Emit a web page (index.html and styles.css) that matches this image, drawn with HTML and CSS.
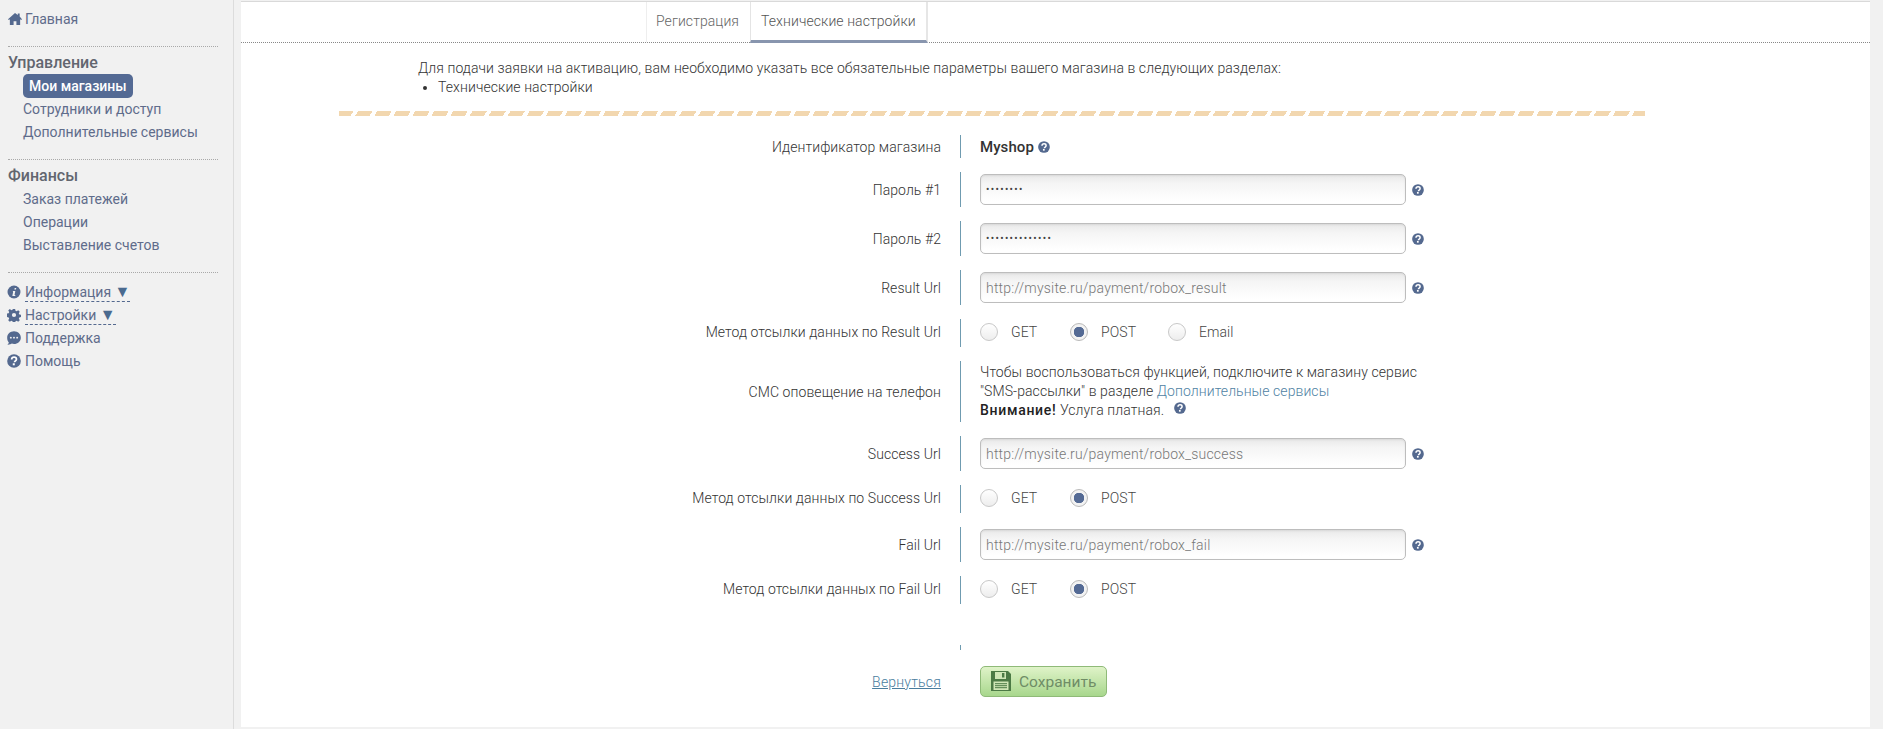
FILE: index.html
```html
<!DOCTYPE html>
<html lang="ru">
<head>
<meta charset="utf-8">
<title>Технические настройки</title>
<link rel="stylesheet" href="styles.css">
</head>
<body>
<svg class="sprite" width="0" height="0" aria-hidden="true">
  <symbol id="q" viewBox="0 0 16 16"><circle cx="8" cy="8" r="7.8" fill="currentColor"/><path d="M5.3 6.3C5.4 4.6 6.6 3.7 8.1 3.700c1.600 0 2.700 1 2.700 2.300 0 1.100-.6 1.600-1.300 2.100-.6.4-.9.7-.9 1.400" fill="none" stroke="#fff" stroke-width="2"/><rect x="6.600" y="10.600" width="2.300" height="2.300" fill="#fff"/></symbol>
</svg>
<div class="page">
  <aside class="sidebar">
    <a class="nav-top" href="#"><svg class="ico" viewBox="0.5 1.500 15 13"><path d="M8 1.500 0.500 8.200l.9 1L2.500 8.300V14.500h4v-4h3v4h4V8.300l1.100.9.900-1L13 5.400V2h-2v1.600z" fill="currentColor"/></svg>Главная</a>
    <div class="sep sep-a"></div>
    <h3>Управление</h3>
    <a class="pill" href="#">Мои магазины</a>
    <a class="sub" href="#">Сотрудники и доступ</a>
    <a class="sub" href="#">Дополнительные сервисы</a>
    <div class="sep sep-b"></div>
    <h3>Финансы</h3>
    <a class="sub sub-first" href="#">Заказ платежей</a>
    <a class="sub" href="#">Операции</a>
    <a class="sub" href="#">Выставление счетов</a>
    <div class="sep sep-c"></div>
    <a class="nav-low" href="#"><svg class="ico" viewBox="0 0 16 16"><circle cx="8" cy="8" r="7.400" fill="currentColor"/><path d="M8.800 3.300h1.800l-.4 1.900H8.400zM6.900 6.800h2.600l-.9 4.500h1l-.3 1.200H6.100l.9-4.500h-.4z" fill="#f1f1f1"/></svg><span class="dash">Информация <b>▼</b></span></a>
    <a class="nav-low" href="#"><svg class="ico" viewBox="0 0 16 16"><path d="M6.700 1h2.600l.4 2 1.300.6 1.800-1.100 1.800 1.800-1.100 1.800.6 1.300 2 .4v2.600l-2 .4-.6 1.300 1.100 1.800-1.800 1.800-1.800-1.100-1.300.6-.4 2H6.700l-.4-2-1.300-.6-1.800 1.100-1.800-1.800 1.100-1.800-.6-1.300-2-.4V6.400l2-.4.600-1.300-1.100-1.800 1.800-1.800L5 2.700l1.300-.6zM8 5.600a2.400 2.400 0 1 0 0 4.800 2.400 2.400 0 0 0 0-4.800z" fill="currentColor" fill-rule="evenodd"/></svg><span class="dash">Настройки <b>▼</b></span></a>
    <a class="nav-low" href="#"><svg class="ico" viewBox="0 0 16 16"><path d="M8 .4c4.300 0 7.800 3.200 7.800 7.200S12.300 14.800 8 14.800c-.9 0-1.700-.1-2.500-.4-1.200.8-2.900 1.300-5 1.200.8-.7 1.400-1.600 1.600-2.600C.9 11.700.2 9.800.2 7.600.2 3.600 3.700.4 8 .4z" fill="currentColor"/><circle cx="4.400" cy="7.600" r="1.100" fill="#f1f1f1"/><circle cx="8" cy="7.600" r="1.100" fill="#f1f1f1"/><circle cx="11.600" cy="7.600" r="1.100" fill="#f1f1f1"/></svg>Поддержка</a>
    <a class="nav-low" href="#"><svg class="ico"><use href="#q"/></svg>Помощь</a>
  </aside>
  <main class="main">
    <nav class="tabs">
      <a class="tab" href="#">Регистрация</a>
      <a class="tab tab-active" href="#">Технические настройки</a>
    </nav>
    <section class="notice">
      <p>Для подачи заявки на активацию, вам необходимо указать все обязательные параметры вашего магазина в следующих разделах:</p>
      <ul><li>Технические настройки</li></ul>
    </section>
    <div class="band"></div>
    <form class="form">
      <div class="row row-id"><label>Идентификатор магазина</label><div class="val val-id"><strong>Myshop</strong><svg class="help help-inline"><use href="#q"/></svg></div></div>
      <div class="row row-input"><label>Пароль #1</label><div class="val"><input class="field pass" type="password" value="12345678"><svg class="help"><use href="#q"/></svg></div></div>
      <div class="row row-input"><label>Пароль #2</label><div class="val"><input class="field pass" type="password" value="12345678901234"><svg class="help"><use href="#q"/></svg></div></div>
      <div class="row row-input"><label>Result Url</label><div class="val"><input class="field" type="text" value="http://mysite.ru/payment/robox_result"><svg class="help"><use href="#q"/></svg></div></div>
      <div class="row row-radio"><label>Метод отсылки данных по Result Url</label><div class="val">
        <span class="opt opt-get"><input type="radio" name="r1">GET</span>
        <span class="opt opt-post"><input type="radio" name="r1" checked>POST</span>
        <span class="opt"><input type="radio" name="r1">Email</span></div></div>
      <div class="row row-sms"><label>СМС оповещение на телефон</label><div class="val val-text">
        <p>Чтобы воспользоваться функцией, подключите к магазину сервис<br>"SMS-рассылки" в разделе <a href="#">Дополнительные сервисы</a><br><strong>Внимание!</strong> Услуга платная. <svg class="help help-sms"><use href="#q"/></svg></p></div></div>
      <div class="row row-input"><label>Success Url</label><div class="val"><input class="field" type="text" value="http://mysite.ru/payment/robox_success"><svg class="help"><use href="#q"/></svg></div></div>
      <div class="row row-radio"><label>Метод отсылки данных по Success Url</label><div class="val">
        <span class="opt opt-get"><input type="radio" name="r2">GET</span>
        <span class="opt opt-post"><input type="radio" name="r2" checked>POST</span></div></div>
      <div class="row row-input"><label>Fail Url</label><div class="val"><input class="field" type="text" value="http://mysite.ru/payment/robox_fail"><svg class="help"><use href="#q"/></svg></div></div>
      <div class="row row-radio"><label>Метод отсылки данных по Fail Url</label><div class="val">
        <span class="opt opt-get"><input type="radio" name="r3">GET</span>
        <span class="opt opt-post"><input type="radio" name="r3" checked>POST</span></div></div>
      <div class="row row-tick"><label></label><div class="val"></div></div>
      <div class="actions">
        <div class="back"><a href="#">Вернуться</a></div>
        <button class="save" type="button"><svg class="disk" viewBox="0 0 20 20"><path d="M0 0h17l3 3v17H0z" fill="#4c7a45"/><rect x="4" y="1" width="11" height="7" fill="#cfe6b6"/><rect x="11" y="2" width="2.400" height="4.500" fill="#4c7a45"/><rect x="2.500" y="10.500" width="15" height="8.500" fill="#cfe6b6"/><path d="M4 12.700h12M4 14.700h12M4 16.700h12" stroke="#4c7a45" stroke-width="1"/></svg>Сохранить</button>
      </div>
    </form>
  </main>
</div>
</body>
</html>
```
FILE: styles.css
```css
* { box-sizing: border-box; }
html, body { margin: 0; height: 100%; }
body { background: #f1f1f1; font-family: Roboto, "Liberation Sans", sans-serif; font-size: 14px; color: #555; overflow: hidden; }
a { text-decoration: none; color: inherit; }
.sprite { position: absolute; }
.page { display: flex; height: 729px; }

.sidebar { width: 234px; height: 729px; flex: none; border-right: 1px solid #dcdcdc; padding: 9px 0 0 8px; color: #5f6c8b; }
.sidebar a { display: block; }
.ico { width: 14px; height: 14px; color: #54698f; flex: none; }
.nav-top { display: flex !important; align-items: center; gap: 3px; height: 19px; }
.sep { width: 210px; border-top: 1px dotted #a9a9a9; }
.sep-a { margin-top: 18px; }
.sep-b { margin-top: 15px; }
.sep-c { margin-top: 15px; }
.sidebar h3 { margin: 5px 0 0; font-size: 16px; line-height: 21px; font-weight: 500; color: #62666f; }
.pill { margin: 1px 0 0 15px; width: 110px; height: 24px; line-height: 24px; padding-left: 6px; border-radius: 5px; background: #546a94; color: #fff; font-weight: 500; }
.sub { margin: 0 0 0 15px; height: 23px; line-height: 23px; }
.sub-first { margin-top: 2px; }
.nav-low { display: flex !important; align-items: center; gap: 4px; height: 23px; margin-left: -1px; }
.sep-c + .nav-low { margin-top: 7px; }
.dash { border-bottom: 1px dashed #54698f; line-height: 17px; height: 18px; margin-top: 2px; }
.dash b { font-size: 16px; line-height: 0; font-weight: 400; color: #4a6a8f; }

.main { width: 1629px; margin: 1px 0 0 7px; height: 726px; background: #fff; border-top: 1px solid #d9d9d9; display: flex; flex-direction: column; font-weight: 300; letter-spacing: .08px; }
.tabs { display: flex; height: 41px; padding-left: 405px; border-bottom: 1px dotted #888; flex: none; }
.tab { height: 40px; line-height: 38px; padding: 0 9px; color: #666; border-left: 1px solid #eee; width: 104px; white-space: nowrap; }
.tab-active { height: 41px; width: 178px; border-left: 1px solid #e4e4e4; border-right: 2px solid #e6e6e6; border-bottom: 3px solid #8895ae; padding-left: 10px; color: #555; }

.notice { padding: 16px 0 0 177px; color: #333; line-height: 19px; }
.notice p { margin: 0; }
.notice ul { margin: 0; padding-left: 20px; }
.band { width: 1306px; height: 5px; margin: 14px 0 0 98px; flex: none; background: repeating-linear-gradient(120deg, #f2d7af 0 12.500px, #fff 12.500px 16.500px); }

.form { display: flex; flex-direction: column; padding-top: 19px; }
.row { display: flex; align-items: center; margin-bottom: 14px; color: #333; }
.row label { width: 700px; text-align: right; flex: none; }
.val { margin-left: 19px; padding-left: 19px; border-left: 1px solid #6f9bb0; display: flex; align-items: center; height: 100%; }
.row-id .val, .row-id { height: 23px; }
.row-input, .row-input .val { height: 35px; }
.row-radio, .row-radio .val { height: 28px; }
.row-radio .val { padding-bottom: 2px; }
.row-radio label { padding-bottom: 2px; }
.row-sms, .row-sms .val { height: 61px; }
.row-tick { height: 5px; margin: 27px 0 16px; }
.row-tick .val { height: 5px; }
.val-id strong { font-weight: 500; color: #333; font-size: 15px; }
.help { width: 12px; height: 12px; color: #54698f; margin-left: 6px; flex: none; }
.help-inline { margin-left: 4px; }
.help-sms { margin: 0 0 0 6px; vertical-align: 1px; }
.field { width: 426px; height: 31px; margin: 0; border: 1px solid #bdbdbd; border-radius: 5px; padding: 0 5px; font: inherit; font-size: 14px; letter-spacing: .19px; color: #777; background: linear-gradient(#e9e9e9, #f5f5f5 30%, #fff 90%); box-shadow: inset 0 1px 2px rgba(0,0,0,.08); outline: 0; }
.pass { font-size: 10px; letter-spacing: 1.350px; color: #444; font-weight: 400; }
.opt { display: inline-flex; align-items: center; gap: 13px; color: #444; }
.opt-get { width: 90px; }
.opt-post { width: 98px; }
.opt input { appearance: none; -webkit-appearance: none; width: 18px; height: 18px; margin: 0; border: 1px solid #c8c8c8; border-radius: 50%; background: linear-gradient(#fff, #ededed); flex: none; }
.opt input:checked { background: radial-gradient(circle, #546a94 0 5px, #f2f2f2 5.500px); border-color: #b9b9b9; }
.val-text p { margin: 0; line-height: 19px; color: #333; }
.val-text a { color: #4f82a3; }
.val-text strong { font-weight: 500; color: #222; letter-spacing: .7px; }

.actions { display: flex; align-items: center; }
.back { width: 700px; margin-right: 39px; text-align: right; }
.back a { color: #4a7d9e; text-decoration: underline; letter-spacing: .2px; }
.save { width: 127px; height: 31px; display: flex; align-items: center; gap: 8px; padding: 0 0 0 10px; border: 1px solid #8fba78; border-radius: 5px; background: linear-gradient(#dff3c8, #a8d78d); color: #6f8d66; font: inherit; font-weight: 400; font-size: 15.500px; letter-spacing: 0; }
.disk { width: 20px; height: 20px; flex: none; margin-top: -2px; }
```
